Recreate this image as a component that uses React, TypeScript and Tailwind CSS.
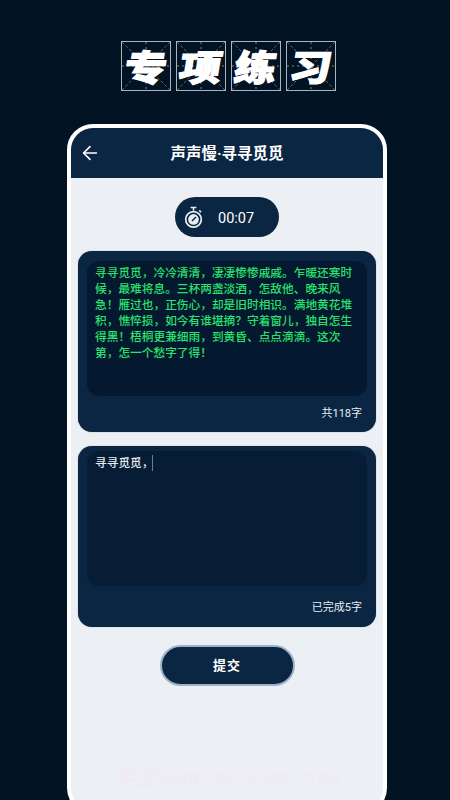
import { ArrowLeft } from 'lucide-react';

const cjk = "font-['Roboto','Noto_Sans_CJK_SC',sans-serif]";
const poem =
  '寻寻觅觅，冷冷清清，凄凄惨惨戚戚。乍暖还寒时候，最难将息。三杯两盏淡酒，怎敌他、晚来风急！雁过也，正伤心，却是旧时相识。满地黄花堆积，憔悴损，如今有谁堪摘？守着窗儿，独自怎生得黑！梧桐更兼细雨，到黄昏、点点滴滴。这次第，怎一个愁字了得！';

function TitleCell({ ch }: { ch: string }) {
  return (
    <div className="relative w-[50px] h-[50px] flex items-center justify-center">
      <svg className="absolute inset-0" width="50" height="50" viewBox="0 0 50 50" fill="none">
        <rect x="0.5" y="0.5" width="49" height="49" stroke="#aab4bd" strokeWidth="1" />
        <path d="M1 1L49 49M49 1L1 49" stroke="#7d8a96" strokeWidth="0.7" strokeDasharray="3 2" />
        <path d="M25 1V49M1 25H49" stroke="#98a4ae" strokeWidth="0.8" strokeDasharray="2 3" />
      </svg>
      <span className="relative text-[42px] leading-none font-black text-white -skew-x-[8deg] scale-y-[0.85] font-['Noto_Sans_CJK_SC',sans-serif] [-webkit-text-stroke:1.5px_white]">
        {ch}
      </span>
    </div>
  );
}

function Stopwatch() {
  return (
    <svg width="19" height="23" viewBox="0 0 20 24" fill="none">
      <path d="M7 1.5H13M10 1.5V5" stroke="#e8edf2" strokeWidth="1.6" />
      <path d="M16 4.5L18 6.5" stroke="#e8edf2" strokeWidth="1.6" />
      <circle cx="10" cy="14" r="8.2" stroke="#e8edf2" strokeWidth="1.8" />
      <circle cx="10" cy="14" r="5.6" fill="#e8edf2" />
      <path d="M8.4 15.6L12.6 11.4" stroke="#0a2642" strokeWidth="1.6" />
    </svg>
  );
}

export default function App() {
  return (
    <div className={`w-[450px] h-[800px] overflow-hidden bg-[#021324] flex flex-col items-center pl-[4px] pt-[41px] ${cjk}`}>
      <div className="flex gap-[5px] ml-[3px]">
        {['专', '项', '练', '习'].map((c) => (
          <TitleCell key={c} ch={c} />
        ))}
      </div>

      <div className="mt-[33px] w-[320px] h-[690px] shrink-0 rounded-[26px] border-4 border-white bg-[#eceff4] overflow-hidden flex flex-col items-center">
        <div className="relative w-full h-[50px] shrink-0 bg-[#0a2642] flex items-center justify-center pt-[4px]">
          <ArrowLeft size={22} strokeWidth={1.7} className="absolute left-[8px] top-[14px] text-white" />
          <span className="text-white text-[15.5px] font-bold">声声慢·寻寻觅觅</span>
        </div>

        <div className="mt-[19px] w-[104px] h-[40px] rounded-full bg-[#0a2642] flex items-center pl-[9px] gap-[15px]">
          <Stopwatch />
          <span className="text-white text-[14.5px] pt-[3px]">00:07</span>
        </div>

        <div className="mt-[14px] w-[298px] h-[181px] rounded-[14px] bg-[#0a2642] shadow-[0_0_1px_#0008] flex flex-col px-[9px] pt-[10px]">
          <div className="h-[135px] rounded-[12px] bg-[#04192f] pl-[8px] pr-[11px] pt-[4px]">
            <p className="text-[11.7px] leading-[16px] text-[#2ae06e] font-medium">{poem}</p>
          </div>
          <div className="mt-[11px] pr-[5px] text-right text-[#e8edf2] text-[11px] leading-[14px]">共118字</div>
        </div>

        <div className="mt-[14px] w-[298px] h-[181px] rounded-[14px] bg-[#0a2642] shadow-[0_0_1px_#0008] flex flex-col px-[9px] pt-[5px]">
          <div className="h-[135px] rounded-[12px] bg-[#061d35] pl-[8px] pr-[11px] pt-[4px] flex items-start">
            <span className="text-[11.7px] leading-[16px] text-[#e8edf2] font-medium">寻寻觅觅，</span>
            <span className="ml-[-1px] mt-0 w-px h-[16px] bg-[#6b7c8d]" />
          </div>
          <div className="mt-[15px] pr-[5px] text-right text-[#e8edf2] text-[11px] leading-[14px]">已完成5字</div>
        </div>

        <button className="mt-[18px] w-[135px] h-[41px] rounded-full bg-[#0a2642] border-2 border-[#9db2c9] text-white text-[13px] font-bold tracking-[1px]">
          提交
        </button>

        <div className="mt-[81px] text-[20px] leading-[22px] font-bold italic text-[#f0eaf5] whitespace-nowrap">
          手游5588 • MX5588.COM
        </div>
      </div>
    </div>
  );
}
